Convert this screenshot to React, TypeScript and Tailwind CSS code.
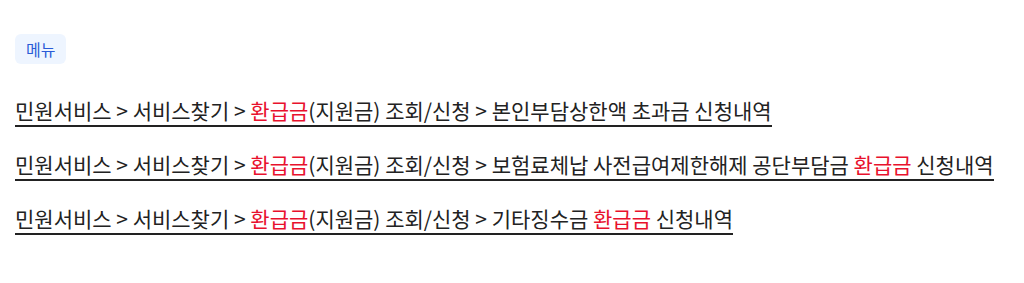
const font = "font-['Noto_Sans_CJK_KR','Noto_Sans',sans-serif]";

const links: { parts: { t: string; red?: boolean }[] }[] = [
  {
    parts: [
      { t: "민원서비스 > 서비스찾기 > " },
      { t: "환급금", red: true },
      { t: "(지원금) 조회/신청 > 본인부담상한액 초과금 신청내역" },
    ],
  },
  {
    parts: [
      { t: "민원서비스 > 서비스찾기 > " },
      { t: "환급금", red: true },
      { t: "(지원금) 조회/신청 > 보험료체납 사전급여제한해제 공단부담금 " },
      { t: "환급금", red: true },
      { t: " 신청내역" },
    ],
  },
  {
    parts: [
      { t: "민원서비스 > 서비스찾기 > " },
      { t: "환급금", red: true },
      { t: "(지원금) 조회/신청 > 기타징수금 " },
      { t: "환급금", red: true },
      { t: " 신청내역" },
    ],
  },
];

export default function App() {
  return (
    <div className={`${font} bg-white w-[1024px] h-[283px] px-[15px] pt-[34px]`}>
      <span className="inline-block rounded-md bg-[#eef5ff] px-[11px] py-[5px] text-[16px] leading-[20px] text-[#2a5bd7]">
        메뉴
      </span>
      <ul className="mt-[32px] flex flex-col gap-[23px]">
        {links.map((l, i) => (
          <li key={i}>
            <a className="inline-block border-b-2 border-[#222] text-[21px] leading-[29px] text-[#222]">
              {l.parts.map((p, j) => (
                <span key={j} className={p.red ? "text-[#e8112d]" : ""}>
                  {p.t}
                </span>
              ))}
            </a>
          </li>
        ))}
      </ul>
    </div>
  );
}
